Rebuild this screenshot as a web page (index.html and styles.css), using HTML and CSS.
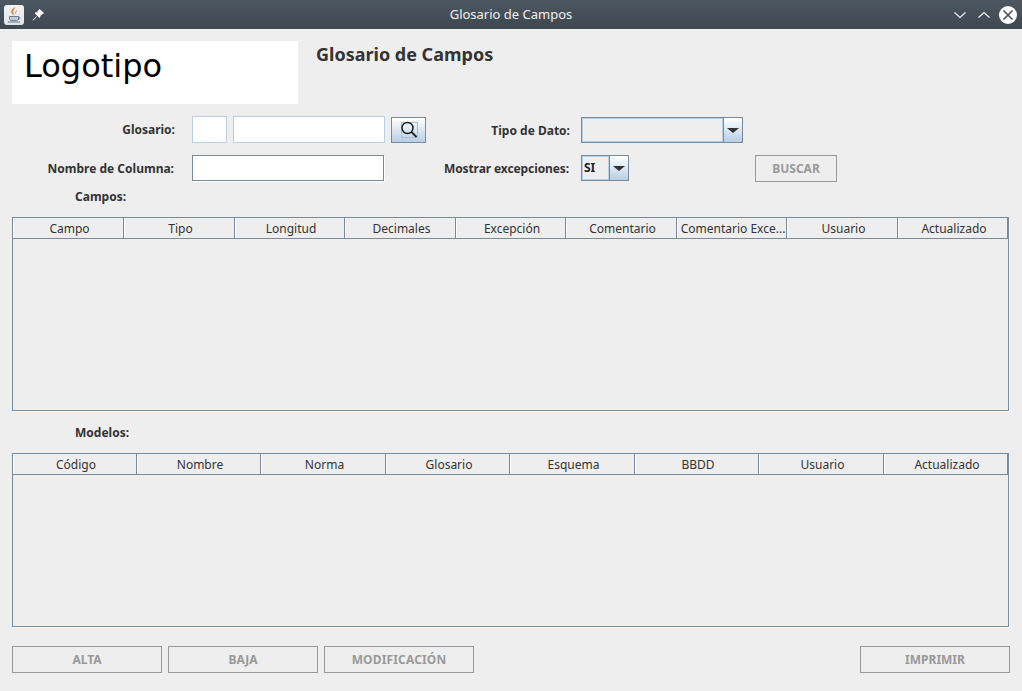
FILE: index.html
```html
<!DOCTYPE html>
<html lang="es">
<head>
<meta charset="utf-8">
<title>Glosario de Campos</title>
<link rel="stylesheet" href="styles.css">
</head>
<body>
<div class="window">
  <header class="titlebar">
    <div class="tb-left">
      <span class="app-icon">
        <svg width="20" height="20" viewBox="0 0 20 20">
          <path d="M10.500 2c1.200 2.200-2.300 3.200-1.500 5.500.4 1 1.200 1.800 1.300 3-1.800-1-3.500-2.700-3-4.700C7.700 4 10 3.600 10.500 2z" fill="#e8762a"/>
          <path d="M13 5c.4 1.800-2 2.300-1 4.800-1.500-1-1.400-3.400 1-4.800z" fill="#ef9a4a"/>
          <path d="M5.500 11.500h9v2.200c0 1.100-1 1.800-2 1.800h-5c-1 0-2-.7-2-1.800z" fill="#c3ccd6" stroke="#5f7489" stroke-width=".9"/>
          <path d="M14.500 12c2 0 2 2.200-.5 2.400M4 17h12" fill="none" stroke="#5f7489" stroke-width="1"/>
        </svg>
      </span>
      <svg class="pin" width="14" height="14" viewBox="0 0 14 14">
        <path d="M8.500 1.500l4 3.500-3.300 2.200-.7 2.300-4.500-4.300 2.300-.7zM5.500 8.500L2 12.300" fill="#fff" stroke="#fff" stroke-width="1"/>
      </svg>
    </div>
    <div class="tb-title">Glosario de Campos</div>
    <div class="tb-right">
      <svg width="14" height="14" viewBox="0 0 14 14"><path d="M1.500 4.500L7 9.500l5.500-5" fill="none" stroke="#f2f3f4" stroke-width="1.200"/></svg>
      <svg width="14" height="14" viewBox="0 0 14 14"><path d="M1.500 9.500L7 4.500l5.500 5" fill="none" stroke="#f2f3f4" stroke-width="1.200"/></svg>
      <span class="tb-close">
        <svg width="18" height="18" viewBox="0 0 18 18"><path d="M4.500 4.500l9 9M13.500 4.500l-9 9" fill="none" stroke="#48525a" stroke-width="1.600"/></svg>
      </span>
    </div>
  </header>

  <main class="content">
    <section class="brand">
      <div class="logo">Logotipo</div>
      <h1 class="heading">Glosario de Campos</h1>
    </section>

    <section class="form-row row-one">
      <label class="lbl lbl-main">Glosario:</label>
      <input class="field field-off field-code" type="text">
      <input class="field field-off field-desc" type="text">
      <button class="search-btn" type="button">
        <svg width="22" height="20" viewBox="0 0 22 20">
          <rect x="3.500" y="2.500" width="16" height="15" fill="none" stroke="#aebccb"/>
          <circle cx="9.500" cy="8" r="5.500" fill="none" stroke="#111" stroke-width="1.400"/>
          <path d="M13.500 12l5 5" stroke="#222" stroke-width="1.800"/>
        </svg>
      </button>
      <label class="lbl lbl-second">Tipo de Dato:</label>
      <div class="combo combo-wide"><span class="combo-value"></span><span class="combo-arrow"></span></div>
    </section>

    <section class="form-row row-two">
      <label class="lbl lbl-main lbl-column">Nombre de Columna:</label>
      <input class="field field-on" type="text">
      <label class="lbl lbl-third">Mostrar excepciones:</label>
      <div class="combo combo-small"><span class="combo-value">SI</span><span class="combo-arrow"></span></div>
      <button class="btn btn-buscar" type="button" disabled>BUSCAR</button>
    </section>

    <div class="section-label label-campos">Campos:</div>
    <section class="table-box table-campos">
      <div class="thead cols-9">
        <div class="th">Campo</div><div class="th">Tipo</div><div class="th">Longitud</div><div class="th">Decimales</div><div class="th">Excepción</div><div class="th">Comentario</div><div class="th">Comentario Exce...</div><div class="th">Usuario</div><div class="th">Actualizado</div>
      </div>
    </section>

    <div class="section-label label-modelos">Modelos:</div>
    <section class="table-box table-modelos">
      <div class="thead cols-8">
        <div class="th">Código</div><div class="th">Nombre</div><div class="th">Norma</div><div class="th">Glosario</div><div class="th">Esquema</div><div class="th">BBDD</div><div class="th">Usuario</div><div class="th">Actualizado</div>
      </div>
    </section>

    <section class="actions">
      <button class="btn btn-action" type="button" disabled>ALTA</button>
      <button class="btn btn-action" type="button" disabled>BAJA</button>
      <button class="btn btn-action btn-modif" type="button" disabled>MODIFICACIÓN</button>
      <button class="btn btn-action btn-print" type="button" disabled>IMPRIMIR</button>
    </section>
  </main>
</div>
</body>
</html>
```
FILE: styles.css
```css
* { box-sizing: border-box; }
html, body { margin: 0; padding: 0; }
body {
  width: 1022px;
  height: 691px;
  overflow: hidden;
  background: #eeeeee;
  font-family: "Noto Sans", sans-serif;
  color: #333333;
}
.window { display: flex; flex-direction: column; height: 691px; }

.titlebar {
  height: 29px;
  flex: none;
  display: flex;
  align-items: center;
  justify-content: space-between;
  background: linear-gradient(#4e5860, #3e474f);
  position: relative;
}
.tb-left { display: flex; align-items: center; gap: 7px; padding-left: 4px; }
.app-icon {
  width: 20px;
  height: 20px;
  background: linear-gradient(#f2f4f6, #dfe4e9);
  border-radius: 3px;
  display: block;
}
.app-icon svg { display: block; }
.pin { display: block; }
.tb-title {
  position: absolute;
  left: 0;
  right: 0;
  top: 0;
  text-align: center;
  color: #eff0f1;
  font-size: 13px;
  line-height: 29px;
}
.tb-right { display: flex; align-items: center; gap: 10px; padding-right: 5px; position: relative; }
.tb-close {
  width: 18px;
  height: 18px;
  margin-left: -2px;
  background: #fff;
  border-radius: 50%;
  display: block;
}
.tb-close svg { display: block; }

.content { flex: 1; padding: 12px 12px 0; display: flex; flex-direction: column; }

.brand { display: flex; height: 63px; }
.logo {
  width: 286px;
  height: 63px;
  background: #fff;
  color: #000;
  font-family: "DejaVu Sans", sans-serif;
  font-size: 32px;
  line-height: 50px;
  padding-left: 12px;
}
.heading {
  margin: 2px 0 0 18px;
  font-size: 18px;
  line-height: 23px;
  font-weight: 700;
  color: #333;
}

.form-row { display: flex; }
.row-one { margin-top: 12px; height: 27px; align-items: flex-end; }
.row-two { margin-top: 12px; height: 27px; align-items: flex-start; }

.lbl {
  font-size: 12px;
  font-weight: 700;
  text-align: right;
  color: #333;
  white-space: nowrap;
  line-height: 27px;
}
.row-two .lbl { line-height: 28px; }
.lbl-main { width: 163px; margin-right: 17px; }
.lbl-column { position: relative; left: -1px; }
.row-one .lbl-second {
  width: 133px;
  margin-left: 11px;
  margin-right: 11px;
  line-height: 29px;
  align-self: flex-start;
}
.lbl-third { width: 185px; margin-right: 12px; letter-spacing: -.1px; }

.field { display: block; padding: 0; margin: 0; background: #fff; outline: 0; }
.field-off { border: 1px solid #b8cfe5; height: 27px; }
.field-code { width: 35px; margin-right: 6px; }
.field-desc { width: 152px; margin-right: 6px; }
.field-on {
  width: 192px;
  height: 26px;
  border: 1px solid #7a8a99;
  box-shadow: 1px 1px 0 #fff;
}

.search-btn {
  width: 35px;
  height: 26px;
  padding: 0;
  border: 1px solid #7a8a99;
  background: linear-gradient(#fff, #b8cfe5);
  display: flex;
  align-items: center;
  justify-content: center;
}

.combo { display: flex; height: 26px; border: 1px solid #7a8a99; background: #eeeeee; }
.combo-wide { width: 162px; }
.combo-small { width: 48px; }
.combo-value {
  flex: 1;
  border: 1px solid #b8cfe5;
  font-size: 12px;
  font-weight: 700;
  line-height: 21px;
  padding-left: 1px;
  color: #222;
}
.combo-arrow {
  width: 19px;
  flex: none;
  border-left: 1px solid #7a8a99;
  background: linear-gradient(#fff, #b8cfe5);
  position: relative;
}
.combo-arrow::after {
  content: "";
  position: absolute;
  left: 3px;
  top: 10px;
  border-left: 6px solid transparent;
  border-right: 6px solid transparent;
  border-top: 5px solid #333;
}

.btn {
  height: 27px;
  padding: 0;
  border: 1px solid #999;
  background: #eee;
  font-family: "Noto Sans", sans-serif;
  font-size: 12px;
  font-weight: 700;
  color: #999;
}
.btn-buscar { width: 82px; margin-left: 126px; }

.section-label { font-size: 12px; font-weight: 700; color: #333; padding-left: 63px; line-height: 16px; }
.label-campos { margin-top: 7px; }
.label-modelos { margin-top: 14px; }

.table-box {
  width: 997px;
  border: 1px solid #7a8a99;
  box-shadow: 1px 1px 0 #fff;
  background: #eee;
}
.table-campos { height: 194px; margin-top: 12px; }
.table-modelos { height: 174px; margin-top: 12px; }
.thead { display: grid; height: 21px; }
.cols-9 { grid-template-columns: 111px 111px 110px 111px 110px 111px 110px 111px 110px; }
.cols-8 { grid-template-columns: 124px 124px 125px 124px 125px 124px 125px 124px; }
.th {
  font-size: 12px;
  line-height: 22px;
  text-align: center;
  padding-left: 3px;
  color: #333;
  border-right: 1px solid #7a8a99;
  border-bottom: 1px solid #7a8a99;
  box-shadow: inset 1px 0 0 #fff;
  white-space: nowrap;
  overflow: hidden;
}

.actions { display: flex; gap: 6px; margin-top: 19px; }
.btn-action { width: 150px; }
.btn-modif { letter-spacing: .15px; }
.btn-print { margin-left: auto; }
```
